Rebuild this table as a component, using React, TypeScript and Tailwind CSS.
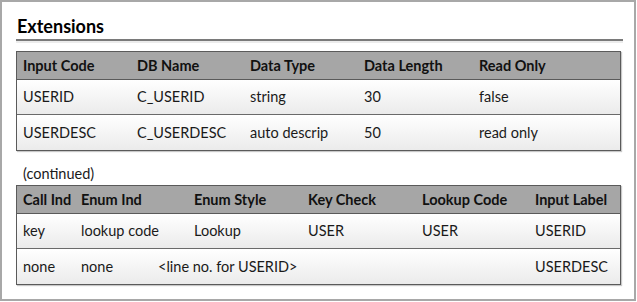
const font = { fontFamily: "Lato, 'Liberation Sans', sans-serif" };

type Col = { label: string; w: string };

const cols1: Col[] = [
  { label: "Input Code", w: "w-[114px]" },
  { label: "DB Name", w: "w-[113px]" },
  { label: "Data Type", w: "w-[114px]" },
  { label: "Data Length", w: "w-[115px]" },
  { label: "Read Only", w: "flex-1" },
];

const rows1 = [
  ["USERID", "C_USERID", "string", "30", "false"],
  ["USERDESC", "C_USERDESC", "auto descrip", "50", "read only"],
];

const cols2: Col[] = [
  { label: "Call Ind", w: "w-[58px]" },
  { label: "Enum Ind", w: "w-[113px]" },
  { label: "Enum Style", w: "w-[114px]" },
  { label: "Key Check", w: "w-[114px]" },
  { label: "Lookup Code", w: "w-[113px]" },
  { label: "Input Label", w: "flex-1" },
];

function Table({ cols, rows, wide }: { cols: Col[]; rows: string[][]; wide?: boolean }) {
  return (
    <div className="border border-[#5a5a5a] shadow-[1px_1px_1px_#c8c8c8]">
      <div className="flex h-[28px] items-center bg-[#a6a6a6] border-b border-[#5a5a5a] text-[14.5px] font-bold text-[#111]">
        {cols.map((c) => (
          <div key={c.label} className={`${c.w} pl-[6px] whitespace-nowrap`}>
            {c.label}
          </div>
        ))}
      </div>
      {rows.map((r, i) => (
        <div
          key={i}
          className={`flex h-[35px] items-center bg-gradient-to-b from-white to-[#ebebeb] text-[14.5px] text-[#1a1a1a] ${
            i < rows.length - 1 ? "border-b border-[#6a6a6a]" : ""
          }`}
        >
          {wide && i === 1 ? (
            <>
              <div className="w-[58px] pl-[6px]">{r[0]}</div>
              <div className="w-[77px] pl-[6px]">{r[1]}</div>
              <div className="flex-1 pl-[6px]">{r[2]}</div>
              <div className="w-[91px] pl-[6px]">{r[3]}</div>
            </>
          ) : (
            r.map((v, j) => (
              <div key={j} className={`${cols[j].w} pl-[6px] whitespace-nowrap`}>
                {v}
              </div>
            ))
          )}
        </div>
      ))}
    </div>
  );
}

export default function App() {
  return (
    <div className="w-[637px] h-[302px] bg-white" style={font}>
      <div className="w-[636px] h-[301px] border-2 border-[#a8a8a8] pl-[14px] pr-[12px]">
        <div className="h-[39px] pt-[12px] border-b-2 border-[#7a7a7a] shadow-[0_2px_0_#ececec] text-[18px] leading-[24px] font-bold text-black mr-[-1px] pl-[1px]">
          Extensions
        </div>
        <div className="mt-[10px] w-[605px]">
          <Table cols={cols1} rows={rows1} />
        </div>
        <div className="mt-[12px] h-[22px] leading-[22px] pl-[7px] text-[14.5px] text-[#1a1a1a]">(continued)</div>
        <div className="w-[605px]">
          <Table
            cols={cols2}
            wide
            rows={[
              ["key", "lookup code", "Lookup", "USER", "USER", "USERID"],
              ["none", "none", "<line no. for USERID>", "USERDESC"],
            ]}
          />
        </div>
      </div>
    </div>
  );
}
